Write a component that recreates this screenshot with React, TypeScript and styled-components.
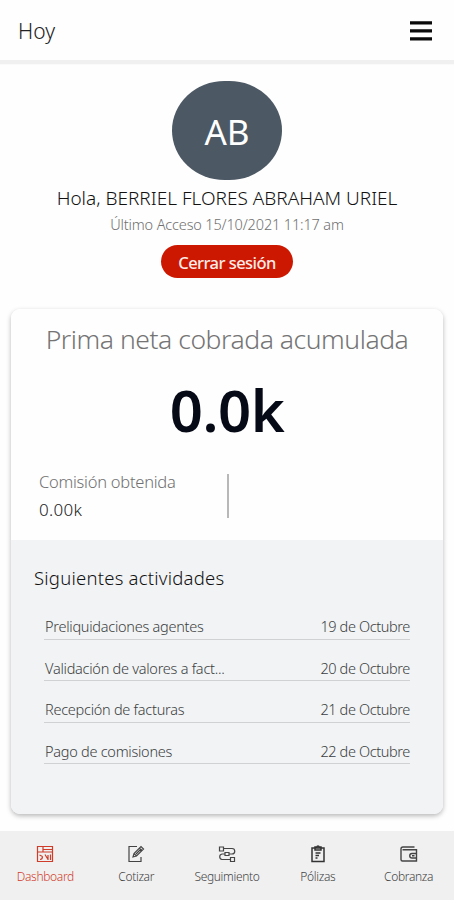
import React from "react";
import styled, { createGlobalStyle } from "styled-components";

const Global = createGlobalStyle`
  * { box-sizing: border-box; }
  body { margin: 0; background: #fefefe; }
`;

const Screen = styled.div`
  width: 454px;
  height: 900px;
  display: flex;
  flex-direction: column;
  overflow: hidden;
  background: #fefefe;
  font-family: "Noto Sans", "Open Sans", sans-serif;
  white-space: nowrap;
`;

const Header = styled.header`
  height: 65px;
  flex: none;
  padding: 0 22px 3px 18px;
  display: flex;
  align-items: center;
  justify-content: space-between;
  border-bottom: 1px solid #fafafa;
  box-shadow: inset 0 -4px 0 #f0f0f0;
`;

const Label = styled.span<{ $size: number; $color: string; $line: number; $spacing?: number; $weight?: number }>`
  display: block;
  font-size: ${(p) => p.$size}px;
  line-height: ${(p) => p.$line}px;
  color: ${(p) => p.$color};
  letter-spacing: ${(p) => p.$spacing ?? 0}px;
  font-weight: ${(p) => p.$weight ?? 300};
`;

const Profile = styled.section`
  height: 244px;
  flex: none;
  padding-top: 16px;
  display: flex;
  flex-direction: column;
  align-items: center;
`;

const Avatar = styled.div`
  width: 110px;
  height: 99px;
  border-radius: 53px / 50px;
  background: #4c5864;
  display: flex;
  align-items: center;
  justify-content: center;
  margin-bottom: 5px;
  padding-top: 2px;
`;

const Logout = styled.button`
  width: 132px;
  height: 33px;
  margin-top: 8px;
  padding: 2px 0 0;
  border: 0;
  border-radius: 17px;
  background: #cc1800;
  font-family: inherit;
  display: flex;
  align-items: center;
  justify-content: center;
`;

const Card = styled.main`
  width: 432px;
  height: 505px;
  flex: none;
  margin-left: 11px;
  border-radius: 9px;
  overflow: hidden;
  box-shadow: 0 2px 5px rgba(0, 0, 0, 0.28);
  display: flex;
  flex-direction: column;
`;

const Summary = styled.section`
  height: 231px;
  flex: none;
  padding-top: 10px;
  display: flex;
  flex-direction: column;
  align-items: center;
  background: #fefefe;
`;

const Commission = styled.div`
  width: 100%;
  margin-top: 8px;
  padding-left: 28px;
  display: flex;
`;

const CommissionText = styled.div`
  width: 188px;
`;

const Divider = styled.div`
  width: 2px;
  height: 44px;
  margin-top: 5px;
  background: #b8b8b8;
`;

const Activities = styled.section`
  flex: 1;
  padding: 22px 33px 0;
  background: #f1f3f5;
`;

const ActivityHeading = styled.h2`
  margin: 0 0 4px -10px;
  font-size: 18.5px;
  font-weight: 300;
  letter-spacing: 0.23px;
  line-height: 32px;
  color: #111;
`;

const ActivityRow = styled.div`
  height: 41.6px;
  padding: 18px 0 0 1px;
  display: flex;
  justify-content: space-between;
  border-bottom: 1px solid #cfd1d3;
`;

const Tabs = styled.nav`
  height: 69px;
  margin-top: auto;
  flex: none;
  display: grid;
  grid-template-columns: repeat(5, 1fr);
  background: #f0f0f0;
`;

const Tab = styled.div<{ $active?: boolean }>`
  display: flex;
  flex-direction: column;
  align-items: center;
  padding-top: 13px;
  color: ${(p) => (p.$active ? "#d03c2a" : "#444")};
  svg { width: 20px; height: 20px; margin-bottom: 1px; fill: none; stroke: currentColor; stroke-width: 1.2; }
`;

const activities = [
  ["Preliquidaciones agentes", "19 de Octubre"],
  ["Validación de valores a fact...", "20 de Octubre"],
  ["Recepción de facturas", "21 de Octubre"],
  ["Pago de comisiones", "22 de Octubre"],
];

const tabs = [
  { name: "Dashboard", icon: <svg viewBox="0 0 20 20"><path d="M2.500 2.500h15v15h-15zM2.500 8h15M8 2.500V8M8 5.500h9M4.500 11l3 1.500M5 15.500c2 0 2.500-1 2.500-3M10 10.500l3 5M13 11v5M15.500 10.500V16" /></svg> },
  { name: "Cotizar", icon: <svg viewBox="0 0 20 20"><path d="M11 2.500H3v15h12V13M7 13l1-3.500 7-7 2.500 2.500-7 7zM13.500 4l2.500 2.500M8.500 10l2 2M10 10l5-5" /></svg> },
  { name: "Seguimiento", icon: <svg viewBox="0 0 20 20"><path d="M2.500 3h4v4h-4zM13.500 13.500h4v4h-4zM8 8.500h4v3H8zM6.500 4.500H15a2.500 2.500 0 0 1 0 5.500h-3M8 10H5a2.800 2.800 0 0 0 0 5.500h8.500" /></svg> },
  { name: "Pólizas", icon: <svg viewBox="0 0 20 20"><path d="M4 4h12v13.500H4zM7 3h2c0-1.500 2-1.500 2 0h2v3H7zM7.500 9h5M7.500 11.500H11M7.500 14H9.500" stroke="#333" strokeWidth="1.500" /></svg> },
  { name: "Cobranza", icon: <svg viewBox="0 0 20 20"><path d="M15.500 3H4a2 2 0 0 0-2 2v10.500a1.500 1.500 0 0 0 1.500 1.500h14V5.800H3.500M17.500 9.500H13a2.200 2.200 0 0 0 0 4.500h4.500zM13 11.800h2.500" strokeWidth="1.400" /></svg> },
];

export default function App() {
  return (
    <Screen>
      <Global />
      <Header>
        <Label $size={21} $line={28} $color="#222">Hoy</Label>
        <svg width="22" height="20" viewBox="0 0 22 20">
          <path d="M0 1.800h22M0 9.800h22M0 17.900h22" stroke="#0a0a0a" strokeWidth="3.300" />
        </svg>
      </Header>
      <Profile>
        <Avatar><Label $size={35} $line={44} $color="#fff" $weight={400}>AB</Label></Avatar>
        <Label $size={19} $line={26} $color="#111">Hola, BERRIEL FLORES ABRAHAM URIEL</Label>
        <Label $size={14.5} $line={26} $color="#707070" $spacing={-0.15}>Último Acceso 15/10/2021 11:17 am</Label>
        <Logout><Label $size={16.5} $line={24} $color="#fdece9" $weight={500} $spacing={-0.55}>Cerrar sesión</Label></Logout>
      </Profile>
      <Card>
        <Summary>
          <Label $size={26.5} $line={40} $color="#747474" $spacing={-0.45}>Prima neta cobrada acumulada</Label>
          <Label $size={58} $line={102} $color="#060a16" $weight={600} $spacing={-0.5}>0.0k</Label>
          <Commission>
            <CommissionText>
              <Label $size={16.5} $line={26} $color="#707070" $spacing={-0.25}>Comisión obtenida</Label>
              <Label $size={17} $line={29} $color="#222" $spacing={0.3}>0.00k</Label>
            </CommissionText>
            <Divider />
          </Commission>
        </Summary>
        <Activities>
          <ActivityHeading>Siguientes actividades</ActivityHeading>
          {activities.map(([title, date]) => (
            <ActivityRow key={title}>
              <Label $size={14.5} $line={20} $color="#3c3e40" $spacing={-0.26}>{title}</Label>
              <Label $size={14.5} $line={20} $color="#3c3e40" $spacing={-0.38}>{date}</Label>
            </ActivityRow>
          ))}
        </Activities>
      </Card>
      <Tabs>
        {tabs.map((tab, i) => (
          <Tab key={tab.name} $active={i === 0}>
            {tab.icon}
            <Label $size={12} $line={24} $color="inherit" $spacing={-0.33}>{tab.name}</Label>
          </Tab>
        ))}
      </Tabs>
    </Screen>
  );
}
